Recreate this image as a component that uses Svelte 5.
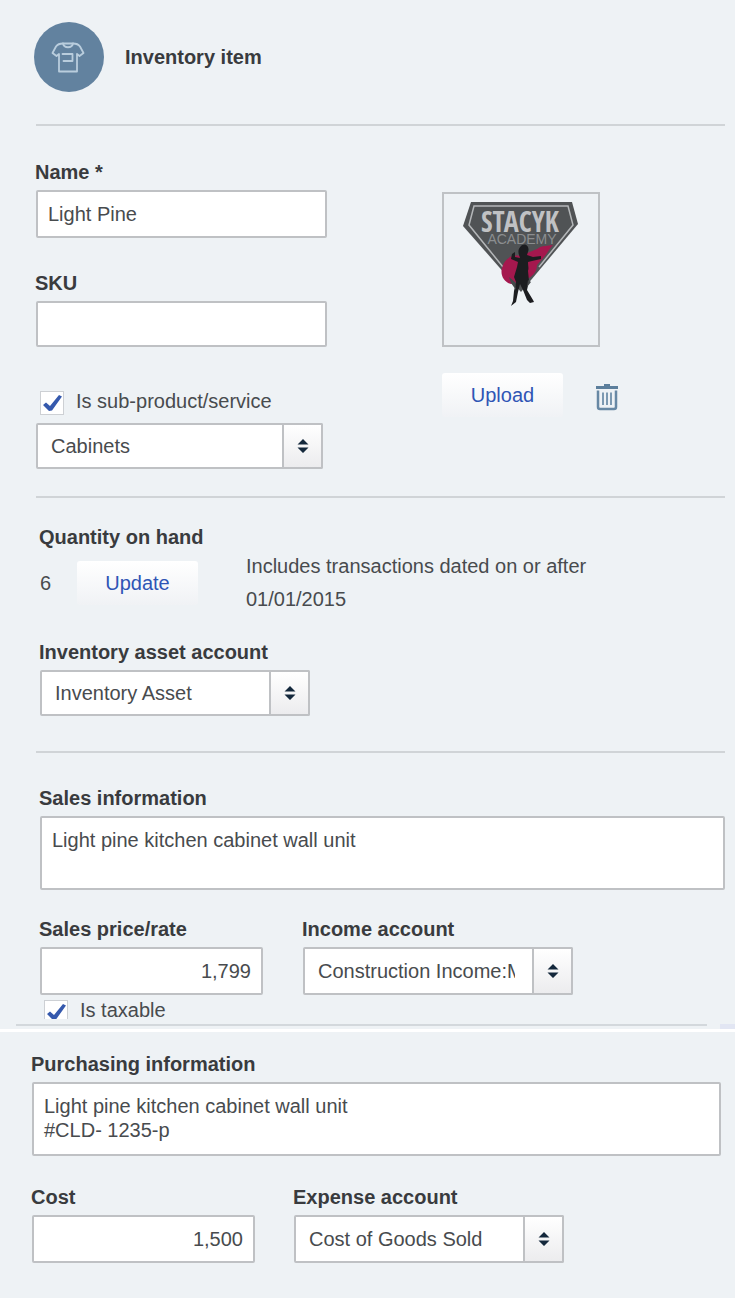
<script lang="ts">
  let name = $state('Light Pine');
  let sku = $state('');
  let isSub = $state(true);
  let parent = $state('Cabinets');
  let assetAccount = $state('Inventory Asset');
  let salesInfo = $state('Light pine kitchen cabinet wall unit');
  let price = $state('1,799');
  let incomeAccount = $state('Construction Income:Materials');
  let taxable = $state(true);
  let purchaseInfo = $state('Light pine kitchen cabinet wall unit\n#CLD- 1235-p');
  let cost = $state('1,500');
  let expenseAccount = $state('Cost of Goods Sold');
</script>

{#snippet arrows()}
  <span class="arrows" aria-hidden="true">
    <svg width="12" height="14" viewBox="0 0 12 14">
      <path d="M6 0 11.5 5.5H.5zM6 14 .5 8.5h11z" fill="#14283c" />
    </svg>
  </span>
{/snippet}

{#snippet tick()}
  <svg class="tick" width="24" height="24" viewBox="0 0 24 24" aria-hidden="true">
    <path d="M3 14 6 11.500l4 3.500L19 4l3 1.500L12 19.500l-3 .5z" fill="#3559ad" />
  </svg>
{/snippet}

<main>
  <div class="sheet">
    <header>
      <svg class="badge" width="70" height="70" viewBox="0 0 70 70" aria-hidden="true">
        <circle cx="35" cy="35" r="35" fill="#62829f" />
        <g fill="none" stroke="#b9cddd" stroke-width="1.800" stroke-linejoin="round" stroke-linecap="round">
          <path d="M29 21.500Q24 21.500 22 24.500L18.500 31l4 3 2.500-2v17.500h18V32l2.500 2 4-3L46 24.500Q44 21.500 39 21.500z" />
          <path d="M29 21.500c1 5 9 5 10 0M28.500 32h10v7h-9" />
        </g>
      </svg>
      <h1>Inventory item</h1>
    </header>

    <section class="identity">
      <div class="details">
        <label class="caption" for="name">Name *</label>
        <input id="name" class="box" type="text" bind:value={name} />

        <label class="caption sku-caption" for="sku">SKU</label>
        <input id="sku" class="box sku" type="text" bind:value={sku} />

        <label class="check sub">
          <span class="check-box"><input type="checkbox" bind:checked={isSub} />{#if isSub}{@render tick()}{/if}</span>
          Is sub-product/service
        </label>
        <div class="picker parent">
          <select aria-label="Parent category" bind:value={parent}>
            <option>Cabinets</option>
          </select>
          {@render arrows()}
        </div>
      </div>

      <div class="media">
        <div class="thumb">
          <svg width="116" height="104" viewBox="0 0 116 104" role="img" aria-label="Stacyk Academy">
            <path d="M8 0h101l6 22-57 68L0 24z" fill="#505355" />
            <path d="M40 65 6 23l5-19h94l5 19-34 42" fill="none" stroke="#b4b7b9" stroke-width="1.500" />
            <path d="M74 47c5-4 11-3 16-4-4 4-6 9-9 12l-7 8c0 8-6 13-13 15L48 82c-7-2-11-9-9-16 2-9 10-14 18-12z" fill="#a5184e" />
            <text class="logo-main" x="57" y="30" text-anchor="middle">STACYK</text>
            <text class="logo-sub" x="59" y="42" text-anchor="middle">ACADEMY</text>
            <path d="M59 43c4-2 8 2 6 7l-1 3 6 2 8-1v3l-9 2-4 1c0 4 1 6 0 9l1 10-2 9 6 10 1 2-4 1-3-3-4-10-3-6-2 8-2 10-5 4 2-5 1-10 2-9-2-5 3-10 1-5-7-3 1-5 3-2v5l5 1-1-3c-1-3-1-6 2-9z" fill="#1c1d20" />
            <path d="M46 75l6 5 1 8-5-7zM65 78l3 2-4 5z" fill="#45484a" />
          </svg>
        </div>
        <div class="media-actions">
          <button type="button" class="soft">Upload</button>
          <button type="button" class="trash" aria-label="Delete image">
            <svg width="22" height="27" viewBox="0 0 22 27" aria-hidden="true">
              <path d="M0 2h8V0h6v2h8v3H0z" fill="#5c7f9c" />
              <path d="M2 6.500V23q0 2 2 2h14q2 0 2-2V6.500" fill="none" stroke="#6788a4" stroke-width="2.500" />
              <path d="M7 8.500V21M11 8.500V21M15 8.500V21" fill="none" stroke="#7c99b1" stroke-width="2" />
            </svg>
          </button>
        </div>
      </div>
    </section>

    <section class="stock">
      <h2 class="caption">Quantity on hand</h2>
      <div class="quantity">
        <span class="count">6</span>
        <button type="button" class="soft">Update</button>
        <p>Includes transactions dated on or after<br />01/01/2015</p>
      </div>
      <label class="caption" for="asset">Inventory asset account</label>
      <div class="picker">
        <select id="asset" bind:value={assetAccount}>
          <option>Inventory Asset</option>
        </select>
        {@render arrows()}
      </div>
    </section>

    <section class="sales">
      <label class="caption" for="sales-info">Sales information</label>
      <textarea id="sales-info" class="box" bind:value={salesInfo}></textarea>
      <div class="pair">
        <div class="amount">
          <label class="caption" for="price">Sales price/rate</label>
          <input id="price" class="box" type="text" bind:value={price} />
        </div>
        <div class="account">
          <label class="caption" for="income">Income account</label>
          <div class="picker tall">
            <select id="income" bind:value={incomeAccount}>
              <option>Construction Income:Materials</option>
            </select>
            {@render arrows()}
          </div>
        </div>
      </div>
      <label class="check taxable">
        <span class="check-box"><input type="checkbox" bind:checked={taxable} />{#if taxable}{@render tick()}{/if}</span>
        Is taxable
      </label>
    </section>
    <div class="edge"><span class="line"></span><span class="stub"></span></div>
  </div>

  <div class="sheet">
    <section class="purchasing">
      <label class="caption" for="purchase-info">Purchasing information</label>
      <textarea id="purchase-info" class="box" bind:value={purchaseInfo}></textarea>
      <div class="pair">
        <div class="amount">
          <label class="caption" for="cost">Cost</label>
          <input id="cost" class="box" type="text" bind:value={cost} />
        </div>
        <div class="account">
          <label class="caption" for="expense">Expense account</label>
          <div class="picker tall">
            <select id="expense" bind:value={expenseAccount}>
              <option>Cost of Goods Sold</option>
            </select>
            {@render arrows()}
          </div>
        </div>
      </div>
    </section>
  </div>
</main>

<style>
  :global(body) {
    margin: 0;
    background: #fff;
  }

  main {
    display: flex;
    flex-direction: column;
    gap: 3px;
    font-family: 'Liberation Sans', Arial, sans-serif;
    font-size: 20px;
    line-height: 24px;
    color: #484b4e;
  }

  main *,
  main *::before {
    box-sizing: border-box;
  }

  input,
  select,
  textarea,
  button {
    font: inherit;
    color: inherit;
    margin: 0;
  }

  .sheet {
    background: #eef2f5;
  }

  header {
    display: flex;
    align-items: center;
    gap: 21px;
    padding: 22px 0 32px 34px;
  }

  .badge {
    display: block;
    flex-shrink: 0;
  }

  h1,
  h2 {
    margin: 0;
    font-size: 20px;
    color: #393b3e;
  }

  /* Sections draw their own rule on top, inset from the sheet's edges */
  .identity,
  .stock,
  .sales {
    margin: 0 10px 0 36px;
    border-top: 2px solid #d0d4d7;
  }

  .caption {
    display: block;
    width: fit-content;
    margin: 0 0 6px -1px;
    font-weight: 700;
    color: #393b3e;
  }

  .box {
    display: block;
    width: 100%;
    height: 48px;
    padding: 0 10px;
    border: 2px solid #bfc1c4;
    border-radius: 2px;
    background: #fff;
  }

  textarea.box {
    height: 74px;
    padding: 10px;
    resize: none;
    overflow: hidden;
  }

  .identity {
    display: flex;
    gap: 115px;
    padding: 34px 0 27px;
  }

  .details {
    flex: 0 1 291px;
    min-width: 0;
  }

  .sku-caption {
    margin-top: 33px;
  }

  .box.sku {
    height: 46px;
  }

  .check {
    display: flex;
    gap: 12px;
    width: fit-content;
    margin-left: 4px;
  }

  .check-box {
    display: grid;
    margin-top: 2px;
    height: 24px;
  }

  .check-box input {
    grid-area: 1 / 1;
    appearance: none;
    width: 24px;
    height: 24px;
    border: 1px solid #cdd0d4;
    background: #fff;
  }

  .tick {
    grid-area: 1 / 1;
    pointer-events: none;
  }

  .check.sub {
    height: 26px;
    margin-top: 42px;
    margin-bottom: 8px;
  }

  .picker {
    display: grid;
    max-width: 270px;
    height: 46px;
  }

  .picker.parent {
    max-width: 287px;
  }

  .picker.tall {
    height: 48px;
  }

  .picker select {
    grid-area: 1 / 1;
    appearance: none;
    width: 100%;
    min-width: 0;
    padding: 0 56px 0 13px;
    border: 2px solid #bfc1c4;
    border-radius: 2px;
    background: #fff;
  }

  .arrows {
    grid-area: 1 / 1;
    justify-self: end;
    display: flex;
    align-items: center;
    justify-content: center;
    width: 41px;
    border: 2px solid #bfc1c4;
    border-radius: 0 2px 2px 0;
    background: linear-gradient(#fff, #ececee);
    pointer-events: none;
  }

  .media {
    padding-top: 32px;
  }

  .thumb {
    display: flex;
    justify-content: center;
    width: 158px;
    height: 155px;
    padding-top: 8px;
    border: 2px solid #bfc2c5;
  }

  .logo-main {
    font-family: 'Open Sans Condensed', 'Roboto Condensed', 'Liberation Sans Narrow', 'Liberation Sans', sans-serif;
    font-size: 28px;
    font-weight: 700;
    fill: #c0c2c4;
  }

  .logo-sub {
    font-size: 14px;
    fill: #8b8e90;
  }

  .media-actions {
    display: flex;
    align-items: center;
    gap: 33px;
    margin-top: 26px;
  }

  .soft {
    width: 121px;
    height: 44px;
    padding: 0;
    border: 0;
    border-radius: 3px;
    background: linear-gradient(#fff, #f0f2f5);
    color: #2f55b5;
  }

  .trash {
    padding: 4px 0 0;
    border: 0;
    background: none;
  }

  .trash svg {
    display: block;
  }

  .stock {
    padding: 27px 0 35px 4px;
  }

  .stock h2 {
    margin-bottom: 1px;
  }

  .quantity {
    display: flex;
    align-items: center;
    margin-bottom: 24px;
  }

  .count {
    width: 37px;
  }

  .quantity p {
    margin: 0 0 0 48px;
    line-height: 33px;
  }

  .sales {
    padding: 33px 0 0 4px;
  }

  .pair {
    display: flex;
    gap: 40px;
    margin-top: 27px;
  }

  .amount {
    flex: 0 1 223px;
    min-width: 0;
  }

  .amount .box {
    text-align: right;
  }

  .account {
    flex: 0 1 270px;
    min-width: 0;
  }

  .taxable {
    height: 21px;
    margin-top: 3px;
  }

  /* The sheet ends part way through this row, so its box is cut off */
  .taxable .check-box {
    height: 19px;
    overflow: hidden;
  }

  .edge {
    display: flex;
    gap: 13px;
    height: 5px;
    margin-top: 5px;
    padding-left: 16px;
  }

  .line {
    flex: 1;
    height: 2px;
    background: #d3d8dc;
  }

  .stub {
    width: 15px;
    background: #e2e6f3;
  }

  .purchasing {
    padding: 20px 14px 35px 32px;
  }

  .purchasing .pair {
    gap: 39px;
    margin-top: 29px;
  }
</style>
